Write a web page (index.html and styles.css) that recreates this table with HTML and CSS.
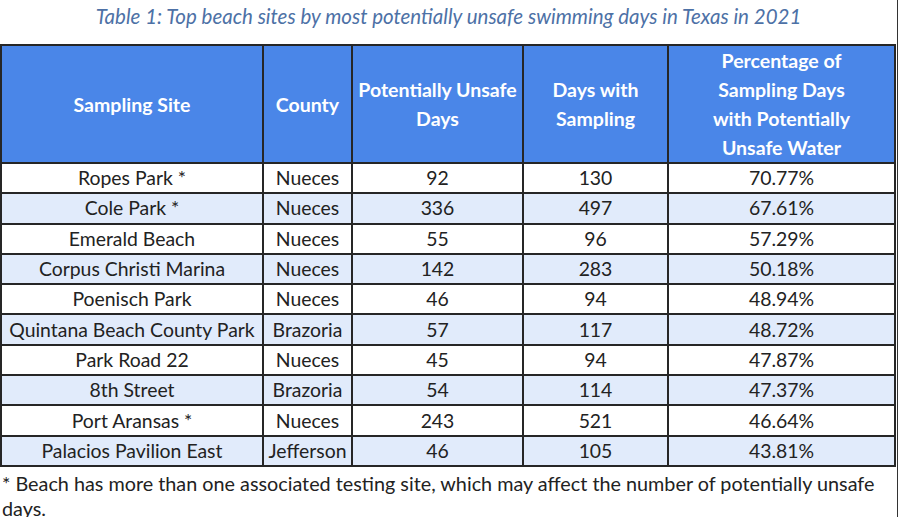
FILE: index.html
```html
<!DOCTYPE html>
<html>
<head>
<meta charset="utf-8">
<link rel="stylesheet" href="styles.css">
</head>
<body>
<div class="page">
  <p class="caption">Table 1: Top beach sites by most potentially unsafe swimming days in Texas in 2021</p>
  <table class="data">
    <colgroup>
      <col class="c1"><col class="c2"><col class="c3"><col class="c4"><col class="c5">
    </colgroup>
    <thead>
      <tr>
        <th>Sampling Site</th>
        <th>County</th>
        <th>Potentially Unsafe Days</th>
        <th>Days with<br>Sampling</th>
        <th>Percentage of<br>Sampling Days<br>with Potentially<br>Unsafe Water</th>
      </tr>
    </thead>
    <tbody>
      <tr><td>Ropes Park *</td><td>Nueces</td><td>92</td><td>130</td><td>70.77%</td></tr>
      <tr class="alt"><td>Cole Park *</td><td>Nueces</td><td>336</td><td>497</td><td>67.61%</td></tr>
      <tr><td>Emerald Beach</td><td>Nueces</td><td>55</td><td>96</td><td>57.29%</td></tr>
      <tr class="alt"><td>Corpus Christi Marina</td><td>Nueces</td><td>142</td><td>283</td><td>50.18%</td></tr>
      <tr><td>Poenisch Park</td><td>Nueces</td><td>46</td><td>94</td><td>48.94%</td></tr>
      <tr class="alt"><td>Quintana Beach County Park</td><td>Brazoria</td><td>57</td><td>117</td><td>48.72%</td></tr>
      <tr><td>Park Road 22</td><td>Nueces</td><td>45</td><td>94</td><td>47.87%</td></tr>
      <tr class="alt"><td>8th Street</td><td>Brazoria</td><td>54</td><td>114</td><td>47.37%</td></tr>
      <tr><td>Port Aransas *</td><td>Nueces</td><td>243</td><td>521</td><td>46.64%</td></tr>
      <tr class="alt"><td>Palacios Pavilion East</td><td>Jefferson</td><td>46</td><td>105</td><td>43.81%</td></tr>
    </tbody>
  </table>
  <p class="note">* Beach has more than one associated testing site, which may affect the number of potentially unsafe days.</p>
</div>
</body>
</html>
```
FILE: styles.css
```css
html, body {
  margin: 0;
  padding: 0;
  background: #ffffff;
}
body {
  font-family: Lato, "Open Sans", sans-serif;
  color: #222222;
}
.page {
  width: 898px;
  height: 517px;
  border-right: 1px solid #333;
  overflow: hidden;
  box-sizing: border-box;
}
.caption {
  margin: 0;
  height: 44px;
  padding-top: 3px;
  box-sizing: border-box;
  text-align: center;
  font-style: italic;
  font-size: 20.5px;
  color: #4d71a6;
  line-height: 26px;
}
.data {
  border-collapse: collapse;
  width: 894px;
  table-layout: fixed;
  margin-left: 0;
}
.c1 { width: 262px; }
.c2 { width: 89px; }
.c3 { width: 171px; }
.c4 { width: 145px; }
.c5 { width: 227px; }
.data th, .data td {
  border: 2px solid #262626;
  text-align: center;
  padding: 0 1px;
}
.data th {
  background: #4a86e8;
  color: #ffffff;
  font-weight: bold;
  font-size: 19.5px;
  line-height: 29px;
  height: 116px;
}
.data td {
  font-size: 19.4px;
  height: 28.3px;
  line-height: 24px;
  white-space: nowrap;
}
.data tr.alt td {
  background: #e1ebfb;
}
.note {
  margin: 0;
  padding-left: 2px;
  font-size: 19.8px;
  line-height: 25px;
  padding-top: 4px;
  width: 880px;
}
```
